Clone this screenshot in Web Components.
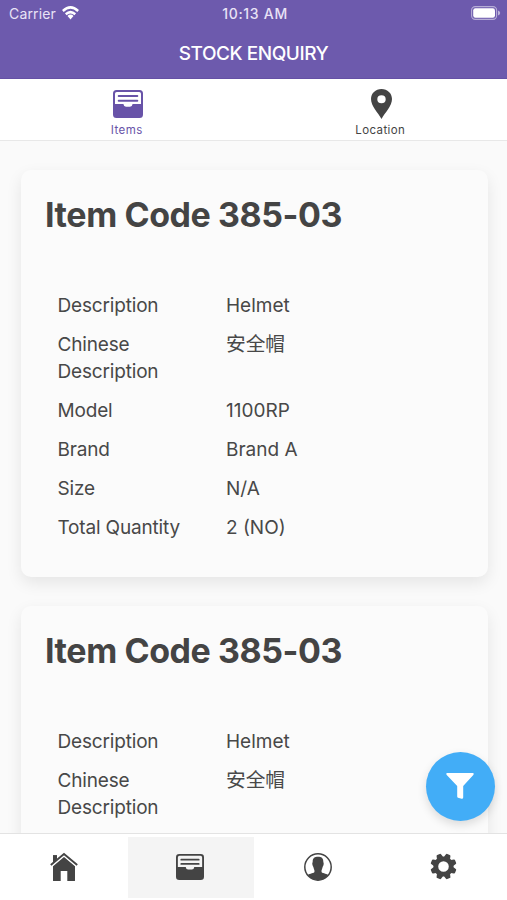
<!DOCTYPE html>
<html lang="en">
<head>
<meta charset="utf-8">
<title>Stock Enquiry</title>
<style>
html, body { margin: 0; height: 100%; overflow: hidden; }
body { font-family: Inter, "Noto Sans CJK SC", sans-serif; color: #444; background: #fafafa; }
</style>
</head>
<body>
<stock-app></stock-app>
<script>
const define = (name, html, setup) => {
  const template = document.createElement('template');
  template.innerHTML = html;
  customElements.define(name, class extends HTMLElement {
    constructor() {
      super();
      this.attachShadow({ mode: 'open' }).append(template.content.cloneNode(true));
    }
    connectedCallback() { if (setup) setup(this, this.shadowRoot); }
  });
};

const icons = {
  wifi: ['0 0 20 15', '<g fill="none" stroke="currentColor" stroke-width="2.9"><path d="M1 5.4Q10-2.4 19 5.4M4.4 8.9Q10 4.3 15.6 8.9"/></g><path d="M10 9.2Q12.2 9.2 13.5 10.8L10 14.4 6.5 10.8Q7.8 9.2 10 9.2Z" fill="currentColor"/>'],
  battery: ['0 0 30 14', '<rect x=".6" y=".6" width="25" height="12.8" rx="3.6" fill="none" stroke="currentColor" stroke-opacity=".5" stroke-width="1.1"/><rect x="2.2" y="2.2" width="21.8" height="9.6" rx="2.2" fill="currentColor"/><path d="M27 4.6Q29.2 5.4 29.2 7T27 9.4Z" fill="currentColor" opacity=".55"/>'],
  tray: ['0 0 30 28', '<path fill="currentColor" fill-rule="evenodd" d="M3.5 0H26.5Q30 0 30 3.5V24.5Q30 28 26.5 28H3.5Q0 28 0 24.5V3.5Q0 0 3.5 0ZM3.8 2Q2 2 2 3.8V14H10.4Q10.8 16.8 13 16.8H17Q19.2 16.8 19.6 14H28V3.8Q28 2 26.2 2Z"/><path d="M5.7 6.1H24.3M5.7 10.7H24.3" stroke="currentColor" stroke-width="2" stroke-linecap="round"/>'],
  pin: ['0 0 20 30', '<path fill="currentColor" fill-rule="evenodd" d="M10 0C4.3 0 0 4.4 0 10C0 17 6.6 23.5 10 30C13.4 23.5 20 17 20 10C20 4.4 15.7 0 10 0ZM10 6.3A4 4 0 1 1 10 14.3A4 4 0 1 1 10 6.3Z"/>'],
  home: ['0 0 28 28', '<path d="M14 3.9L25 13.3V27.4Q25 28 24.4 28H17.3V18H10.7V28H3.6Q3 28 3 27.4V13.3Z" fill="currentColor"/><path d="M3 9.6V2.2H7V6.2Z" fill="currentColor"/><path d="M.8 12.4L14 1.2 27.2 12.4" fill="none" stroke="#fff" stroke-width="3.2"/><path d="M3 9.6V2.2H7V6.2Z" fill="currentColor"/><path d="M.8 11.9L14 .9 27.2 11.9" fill="none" stroke="currentColor" stroke-width="1.9"/>'],
  user: ['0 0 28 28', '<circle cx="14" cy="14" r="13.2" fill="none" stroke="currentColor" stroke-width="1.5"/><path fill="currentColor" d="M8.7 8.5C8.6 5.2 10.8 3.8 14 3.8S19.4 5.2 19.3 8.5C19.3 9.7 20.1 10.1 19.5 12C19.2 13 18.8 13.2 18.5 14.5C18.2 16 17.5 16.7 17.5 18.5C17.5 20.6 22.2 20.2 24.4 22Q20.4 27.2 14 27.2T3.6 22C5.8 20.2 10.5 20.6 10.5 18.5C10.5 16.7 9.8 16 9.5 14.5C9.2 13.2 8.8 13 8.5 12C7.9 10.1 8.7 9.7 8.7 8.5Z"/>'],
  gear: ['-13 -13 26 26', '<circle r="8" fill="none" stroke="currentColor" stroke-width="5"/>' +
    [22.5, 67.5, 112.5, 157.5, 202.5, 247.5, 292.5, 337.5].map(a => `<path transform="rotate(${a})" d="M-3.4-9.5L-2.5-12.8Q-2.3-13.6-1.4-13.6H1.4Q2.3-13.6 2.5-12.8L3.4-9.5Z" fill="currentColor"/>`).join('')],
  funnel: ['0 0 28 26', '<path d="M1 0H27Q28.2 .3 27.5 1.7L17.2 13V24.5Q17 26 15.6 25.7L12 24.8Q11.2 24.5 11.2 23.5V13L.5 1.7Q-.2 .3 1 0Z" fill="currentColor"/>']
};

define('ui-icon', `<style>
:host { display: block; flex: none; }
svg { display: block; width: 100%; height: 100%; overflow: visible; }
</style><svg aria-hidden="true" preserveAspectRatio="none"></svg>`, (el, root) => {
  const [box, body] = icons[el.getAttribute('name')];
  const svg = root.querySelector('svg');
  svg.setAttribute('viewBox', box);
  svg.innerHTML = body;
});

define('status-bar', `<style>
:host { display: grid; grid-template-columns: 1fr auto 1fr; align-items: center; height: 27px; padding: 0 6px 0 9px; font-size: 14px; line-height: 27px; color: #e9e3f6; }
div { display: flex; align-items: center; gap: 6px; }
.carrier { letter-spacing: .15px; }
.time { font-weight: 500; letter-spacing: .7px; }
.end { justify-content: end; }
ui-icon { color: #fff; }
.wifi { width: 17px; height: 14px; margin-top: -1px; }
.battery { width: 30px; height: 14px; margin-top: -1px; }
</style>
<div><span class="carrier">Carrier</span><ui-icon class="wifi" name="wifi"></ui-icon></div>
<span class="time">10:13 AM</span>
<div class="end"><ui-icon class="battery" name="battery"></ui-icon></div>`);

define('app-header', `<style>
:host { display: block; flex: none; box-sizing: border-box; height: 79px; background: #6d5aad; border-bottom: 1px solid #6550a5; color: #fff; }
h1 { margin: 0; text-align: center; font-size: 19px; font-weight: 500; line-height: 53px; letter-spacing: -.45px; }
</style><status-bar></status-bar><h1><slot></slot></h1>`);

define('tab-item', `<style>
:host { display: flex; flex-direction: column; align-items: center; box-sizing: border-box; padding-top: 9px; font-size: 11.5px; letter-spacing: .4px; line-height: 16px; }
:host([selected]) { color: #6853a8; }
.icon { display: grid; place-items: center; height: 32px; margin-bottom: 2px; }
</style><div class="icon"><slot name="icon"></slot></div><span><slot></slot></span>`);

define('top-tabs', `<style>
:host { display: grid; grid-template-columns: 1fr 1fr; flex: none; box-sizing: border-box; height: 62px; background: #fff; border-bottom: 1px solid #e8e8e8; }
.tray { width: 30px; height: 28px; margin: -1px 0 0 2px; }
.pin { width: 21px; height: 30px; margin: -1px 0 0 2px; }
</style>
<tab-item selected><ui-icon slot="icon" class="tray" name="tray"></ui-icon>Items</tab-item>
<tab-item><ui-icon slot="icon" class="pin" name="pin"></ui-icon>Location</tab-item>`);

define('detail-row', `<style>
:host { display: grid; grid-template-columns: 144.5px 1fr; column-gap: 24px; padding: 6px 0; font-size: 19px; line-height: 27px; color: #484848; }
.label { letter-spacing: -.17px; }
:host(:lang(zh)) .value { font-size: 19.7px; }
</style><span class="label"></span><span class="value"><slot></slot></span>`, (el, root) => {
  root.querySelector('.label').textContent = el.getAttribute('label');
});

define('item-card', `<style>
:host { display: block; flex: none; box-sizing: border-box; height: 407px; padding: 22px 24px 0; border-radius: 10px; background: #fbfbfb; box-shadow: 0 6px 16px rgba(0,0,0,.085); }
h2 { margin: 0 0 49px; font-size: 34px; font-weight: 700; line-height: 45px; letter-spacing: -.42px; white-space: nowrap; }
.rows { padding: 0 12.5px; }
</style><h2></h2><div class="rows"><slot></slot></div>`, (el, root) => {
  root.querySelector('h2').textContent = 'Item Code ' + el.getAttribute('code');
});

define('item-list', `<style>
:host { display: flex; flex-direction: column; gap: 29px; flex: 1; min-height: 0; overflow: hidden; box-sizing: border-box; padding: 29px 19.5px 0 21px; background: #fafafa; }
</style><slot></slot>`);

define('filter-button', `<style>
:host { position: absolute; right: 12px; bottom: 79px; display: grid; place-items: center; width: 69px; height: 69px; border-radius: 50%; background: #42adf7; color: #fff; box-shadow: 0 4px 10px rgba(0,0,0,.13); }
ui-icon { width: 28px; height: 26px; margin: -1px 0 0 -1px; }
</style><ui-icon name="funnel"></ui-icon>`);

define('bottom-nav', `<style>
:host { display: grid; grid-template-columns: 128px 126px 127px 126px; flex: none; box-sizing: border-box; height: 67px; padding: 3px 0 2px; border-top: 1px solid #e3e3e3; background: #fff; }
div { display: grid; place-items: center; }
.active { background: #f4f4f4; }
.home { width: 28px; height: 28px; margin-top: -1px; }
.tray { width: 28px; height: 26px; margin: -2px 0 0 -2px; }
.user { width: 28px; height: 28px; margin-top: -2px; }
.gear { width: 25px; height: 25px; margin: -2px 0 0 -1px; }
</style>
<div><ui-icon class="home" name="home"></ui-icon></div>
<div class="active"><ui-icon class="tray" name="tray"></ui-icon></div>
<div><ui-icon class="user" name="user"></ui-icon></div>
<div><ui-icon class="gear" name="gear"></ui-icon></div>`);

define('stock-app', `<style>
:host { display: flex; flex-direction: column; position: relative; width: 100%; height: 900px; overflow: hidden; }
</style>
<app-header>STOCK ENQUIRY</app-header>
<top-tabs></top-tabs>
<item-list>
<item-card code="385-03">
<detail-row label="Description">Helmet</detail-row>
<detail-row label="Chinese Description" lang="zh">安全帽</detail-row>
<detail-row label="Model">1100RP</detail-row>
<detail-row label="Brand">Brand A</detail-row>
<detail-row label="Size">N/A</detail-row>
<detail-row label="Total Quantity">2 (NO)</detail-row>
</item-card>
<item-card code="385-03">
<detail-row label="Description">Helmet</detail-row>
<detail-row label="Chinese Description" lang="zh">安全帽</detail-row>
</item-card>
</item-list>
<bottom-nav></bottom-nav>
<filter-button></filter-button>`);
</script>
</body>
</html>
